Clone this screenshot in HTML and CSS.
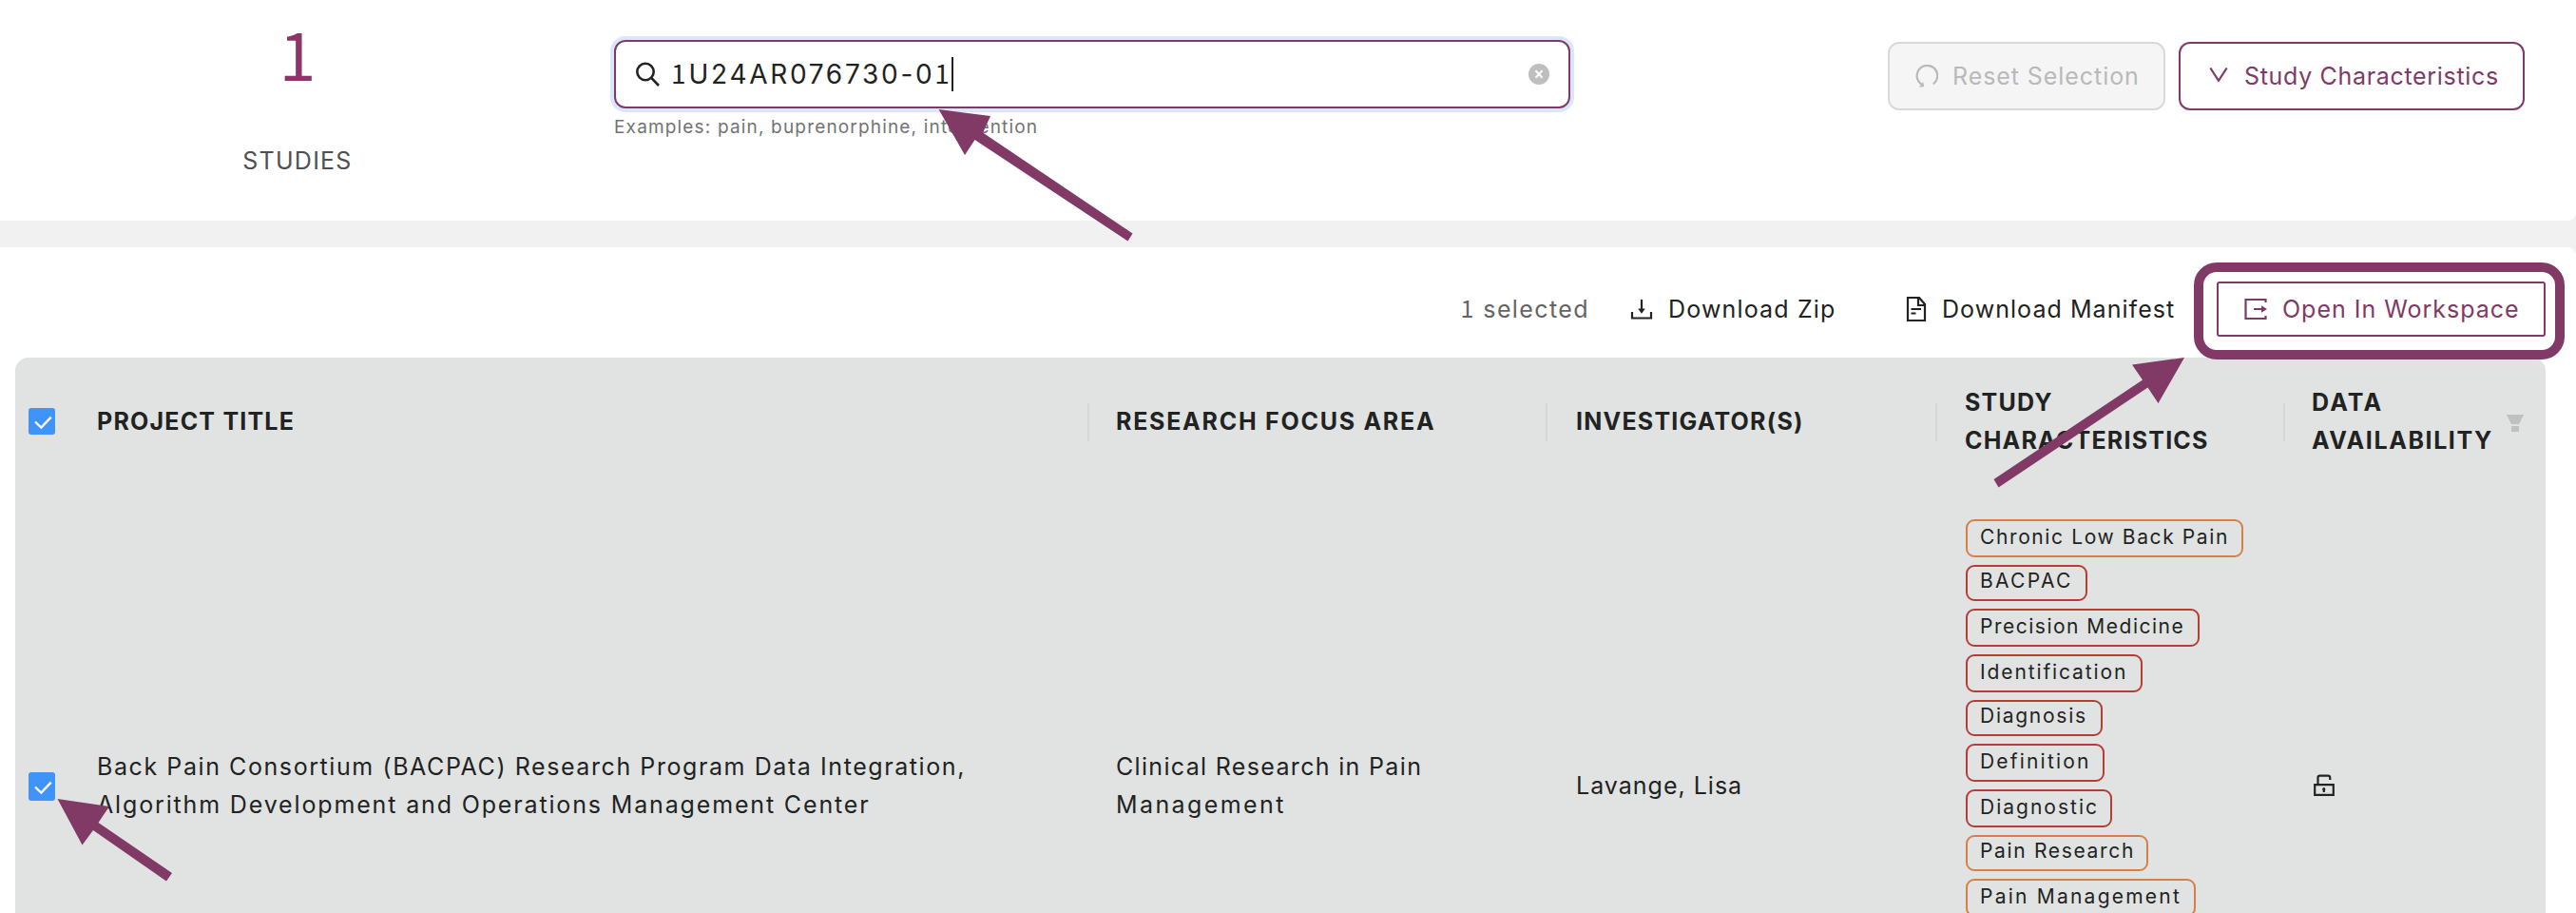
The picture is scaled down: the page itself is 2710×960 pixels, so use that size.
FILE: index.html
```html
<!DOCTYPE html>
<html lang="en">
<head>
<meta charset="utf-8">
<title>Discovery</title>
<link rel="stylesheet" href="styles.css">
</head>
<body>
<header class="summary">
  <div class="stat">
    <div class="stat-number one">1</div>
    <div class="stat-label">STUDIES</div>
  </div>
  <div class="search">
    <div class="search-box">
      <svg class="search-icon" viewBox="0 0 28 28" width="28" height="28"><circle cx="11" cy="11.500" r="8.700"/><path d="M17.200 17.800l7.800 8.200"/></svg>
      <div class="search-value"><span class="one lead">1</span>U24AR076730-0<span class="one">1</span></div>
      <span class="caret"></span>
      <svg class="clear" viewBox="0 0 22 22" width="22" height="22"><circle cx="11" cy="11" r="11"/><path d="M7.500 7.200l7 7.600M14.500 7.200l-7 7.600"/></svg>
    </div>
    <div class="hint">Examples: pain, buprenorphine, intervention</div>
  </div>
  <div class="filters">
    <div class="btn btn-disabled">
      <svg viewBox="0 0 24 24" width="24" height="24"><path d="M6.800 20.800A10.800 10.800 0 1 1 18.800 20.300"/><path class="solid" d="M3.800 23.500l5.200-.2-.6-5z"/></svg>
      <span class="reset-text">Reset Selection</span>
    </div>
    <div class="btn btn-outline">
      <svg viewBox="0 0 20 16" width="20" height="16"><path d="M1.300.5L10 13.800 18.700.5"/></svg>
      <span class="char-text">Study Characteristics</span>
    </div>
  </div>
</header>
<div class="divider"><div class="corner corner-top"></div><div class="corner corner-bottom"></div></div>
<main class="results">
  <div class="toolbar">
    <div class="selected"><span class="one">1</span> selected</div>
    <div class="action zip">
      <svg viewBox="0 0 24 24" width="24" height="24"><path d="M2 15v6.500h20V15M12 2v12"/><path class="solid" d="M8.200 11.500h7.600L12 16.800z"/></svg>
      <span>Download Zip</span>
    </div>
    <div class="action manifest">
      <svg viewBox="0 0 22 26" width="22" height="26"><path d="M2 1h12l6 7v17H2zM13 1v8h7M5.500 13h10.500M5.500 17.500h5"/></svg>
      <span>Download Manifest</span>
    </div>
    <div class="action workspace">
      <svg viewBox="0 0 24 24" width="24" height="24"><path d="M22.500 5V2h-21v20h21v-3M10 12h9"/><path class="solid" d="M18 8.300l6 3.700-6 3.700z"/></svg>
      <span>Open In Workspace</span>
    </div>
  </div>
  <div class="table">
    <div class="row head">
      <div class="cell check"><span class="checkbox"><svg viewBox="0 0 28 28" width="28" height="28"><path d="M7 14.500l6.300 6 10.400-10.800"/></svg></span></div>
      <div class="cell sep"><span class="ls-title">PROJECT TITLE</span></div>
      <div class="cell sep focus"><span class="ls-focus">RESEARCH FOCUS AREA</span></div>
      <div class="cell sep"><span class="ls-invest">INVESTIGATOR(S)</span></div>
      <div class="cell sep study"><span class="ls-study">STUDY<br>CHARACTERISTICS</span></div>
      <div class="cell avail"><span><span class="ls-data">DATA</span><br>AVAILABILITY</span>
        <svg class="funnel" viewBox="0 0 18 18" width="18" height="18"><path d="M0 0h18l-5 10H5zM5 12h8v6H5z"/></svg></div>
    </div>
    <div class="row body">
      <div class="cell check"><span class="checkbox"><svg viewBox="0 0 28 28" width="28" height="28"><path d="M7 14.500l6.300 6 10.400-10.800"/></svg></span></div>
      <div class="cell"><span><span class="ls-name">Back Pain Consortium (BACPAC) Research Program Data Integration,</span><br><span class="ls-name2">Algorithm Development and Operations Management Center</span></span></div>
      <div class="cell focus"><span><span class="ls-area">Clinical Research in Pain</span><br><span class="ls-area2">Management</span></span></div>
      <div class="cell"><span class="ls-person">Lavange, Lisa</span></div>
      <div class="cell tags">
        <span class="tag orange t1">Chronic Low Back Pain</span>
        <span class="tag t2">BACPAC</span>
        <span class="tag t3">Precision Medicine</span>
        <span class="tag t4">Identification</span>
        <span class="tag t5">Diagnosis</span>
        <span class="tag t6">Definition</span>
        <span class="tag t7">Diagnostic</span>
        <span class="tag orange t8">Pain Research</span>
        <span class="tag orange t9">Pain Management</span>
      </div>
      <div class="cell"><svg class="lock" viewBox="0 0 22 24" width="22" height="24"><path d="M1.200 11.200h19.600v10.600H1.200zM4.500 11V3.500Q4.500 1.700 6.500 1.700H15Q17.300 1.700 17.300 4v2"/><path d="M10.800 14.500v4.500"/><circle class="solid" cx="10.800" cy="15.800" r="1.600"/></svg></div>
    </div>
  </div>
</main>
<!-- callouts drawn over the page -->
<div class="highlight"></div>
<svg class="arrows" viewBox="0 0 2710 960" width="2710" height="960">
  <path d="M987.500 115L1042 122 1034 139.500 1191.500 245.500 1186.500 253.500 1025.500 147 1015 163z"/>
  <path d="M2298 376L2243 383.500 2254 399.500 2097.500 504 2102.500 512.500 2259.500 407.500 2270.500 424z"/>
  <path d="M60.500 840L115 848 103.500 865 181 918 175 926.500 98 873 86.500 888.500z"/>
</svg>
</body>
</html>
```
FILE: styles.css
```css
* { box-sizing: border-box; }
html { height: 960px; overflow: hidden; }
body {
  margin: 0;
  width: 2710px;
  height: 960px;
  overflow: hidden;
  position: relative;
  background: #fff;
  color: #212322;
  font: 25px/40px Inter, "Liberation Sans", sans-serif;
  white-space: nowrap;
}
svg { flex: none; fill: none; stroke: currentColor; stroke-width: 2.2; }
.solid { fill: currentColor; stroke: none; }
.one { font-family: "Noto Sans CJK SC", sans-serif; line-height: 0; }

.summary { display: grid; grid-template-columns: 646px 1006px 1fr; height: 232px; }
.stat { display: flex; flex-direction: column; align-items: center; padding: 15px 20px 0 0; }
.stat-number { font-size: 70px; line-height: 80px; color: #8d3468; }
.stat-label { margin-top: 54px; letter-spacing: 1.24px; color: #4f5150; }

.search { padding-top: 42px; }
.search-box {
  display: flex;
  align-items: center;
  height: 72px;
  padding: 0 20px;
  border: 2px solid #803a65;
  border-radius: 12px;
  box-shadow: 0 0 0 4px #d9e6fd;
}
.search-icon { stroke-width: 2.6; }
.search-value { margin-left: 10px; font-size: 28px; letter-spacing: 2.7px; }
.search-value .lead { letter-spacing: 3px; }
.caret { width: 2px; height: 36px; margin-left: -1px; background: #212322; }
.clear { margin-left: auto; color: #fff; stroke-width: 2; }
.clear circle { fill: #bfbfbf; stroke: none; }
.hint { margin-top: 4px; font-size: 19px; line-height: 32px; letter-spacing: 1.17px; color: #737373; }

.filters { display: flex; justify-content: flex-end; gap: 14px; padding: 44px 54px 0 0; }
.btn { display: flex; align-items: center; height: 72px; border: 2px solid; border-radius: 12px; }
.btn-disabled { width: 292px; padding-left: 27px; gap: 15px; color: #b9b9b9; border-color: #d9d9d9; background: #f5f5f5; }
.btn-outline { width: 364px; padding-left: 30px; gap: 17px; color: #803a65; box-shadow: 0 4px 0 #fbfbfb; }
.btn-outline svg { margin-bottom: 2px; }
.reset-text { letter-spacing: .93px; }
.char-text { letter-spacing: .68px; }

.divider { position: relative; height: 28px; background: #f1f1f1; }
.corner { position: absolute; right: 0; width: 10px; height: 10px; }
.corner-top { top: -10px; background: radial-gradient(circle at 0 0, #fff 10px, #f1f1f1 10.5px); }
.corner-bottom { bottom: -10px; background: radial-gradient(circle at 0 100%, #fff 10px, #f1f1f1 10.5px); }

.results { height: 700px; overflow: hidden; }
.toolbar { display: flex; align-items: center; justify-content: flex-end; height: 116px; padding: 36px 32px 22px 0; }
.action { display: flex; align-items: center; }
.selected { margin-right: 43px; color: #636564; letter-spacing: 1.4px; }
.zip { width: 290px; gap: 16px; letter-spacing: 1.16px; }
.manifest { width: 327px; gap: 16px; letter-spacing: 1.05px; }
.workspace {
  width: 346px;
  height: 58px;
  padding-left: 27px;
  gap: 16px;
  border: 2px solid;
  border-radius: 3px;
  color: #803a65;
  letter-spacing: .98px;
}

.table { margin: 0 32px 0 16px; background: #e1e3e2; border-radius: 14px 14px 0 0; }
.row { display: grid; grid-template-columns: 56px 1074px 482px 410px 366px 274px; }
.head { height: 134px; font-weight: 700; }
.body { height: 450px; }
.cell { display: flex; align-items: center; height: 632px; padding-left: 30px; }
.head .cell { position: relative; height: 134px; }
.sep::after { content: ""; position: absolute; right: 0; top: 48px; width: 2px; height: 40px; background: #d5d7d6; }
.cell.focus { padding-left: 28px; }
.cell.study { padding-left: 29px; }
.cell.check { padding-left: 14px; }
.checkbox { display: flex; width: 28px; height: 28px; border-radius: 3px; background: #4093f8; color: #fff; }
.checkbox svg { stroke-width: 2.4; }
.body .checkbox { height: 30px; margin-top: 2px; align-items: center; }
.cell.avail { padding-left: 28px; letter-spacing: 1.59px; }
.funnel { margin-left: 14px; margin-top: 4px; fill: #bfc0bf; stroke: none; }

.ls-title { letter-spacing: 1.2px; }
.ls-focus { letter-spacing: 1.74px; }
.ls-invest { letter-spacing: 1.23px; }
.ls-study { letter-spacing: 1.2px; }
.ls-data { letter-spacing: 2.2px; }
.ls-name { letter-spacing: 1.58px; }
.ls-name2 { letter-spacing: 1.85px; }
.ls-area { letter-spacing: 1.33px; }
.ls-area2 { letter-spacing: 2.4px; }
.ls-person { letter-spacing: 1px; }

.cell.tags { flex-direction: column; align-items: flex-start; gap: 8px; padding-top: 36px; }
.tag {
  flex: none;
  height: 40px;
  padding-left: 13px;
  border: 2px solid #b63c35;
  border-radius: 9px;
  font-size: 21px;
  line-height: 33px;
}
.tag:nth-child(3n+2) { height: 38px; line-height: 29px; }
.tag.orange { border-color: #d67f48; }
.t1 { width: 292px; letter-spacing: 1.61px; }
.t2 { width: 128px; letter-spacing: 2.3px; }
.t3 { width: 246px; letter-spacing: 1.5px; }
.t4 { width: 186px; letter-spacing: 1.88px; }
.t5 { width: 144px; letter-spacing: 1.74px; }
.t6 { width: 146px; letter-spacing: 2.19px; }
.t7 { width: 154px; letter-spacing: 2.01px; }
.t8 { width: 192px; letter-spacing: 1.67px; }
.t9 { width: 242px; letter-spacing: 2.23px; }

.highlight {
  position: absolute;
  left: 2308px;
  top: 276px;
  width: 390px;
  height: 102px;
  border: 10px solid #803a65;
  border-radius: 24px;
}
.arrows { position: absolute; left: 0; top: 0; fill: #803a65; stroke: none; }
```
